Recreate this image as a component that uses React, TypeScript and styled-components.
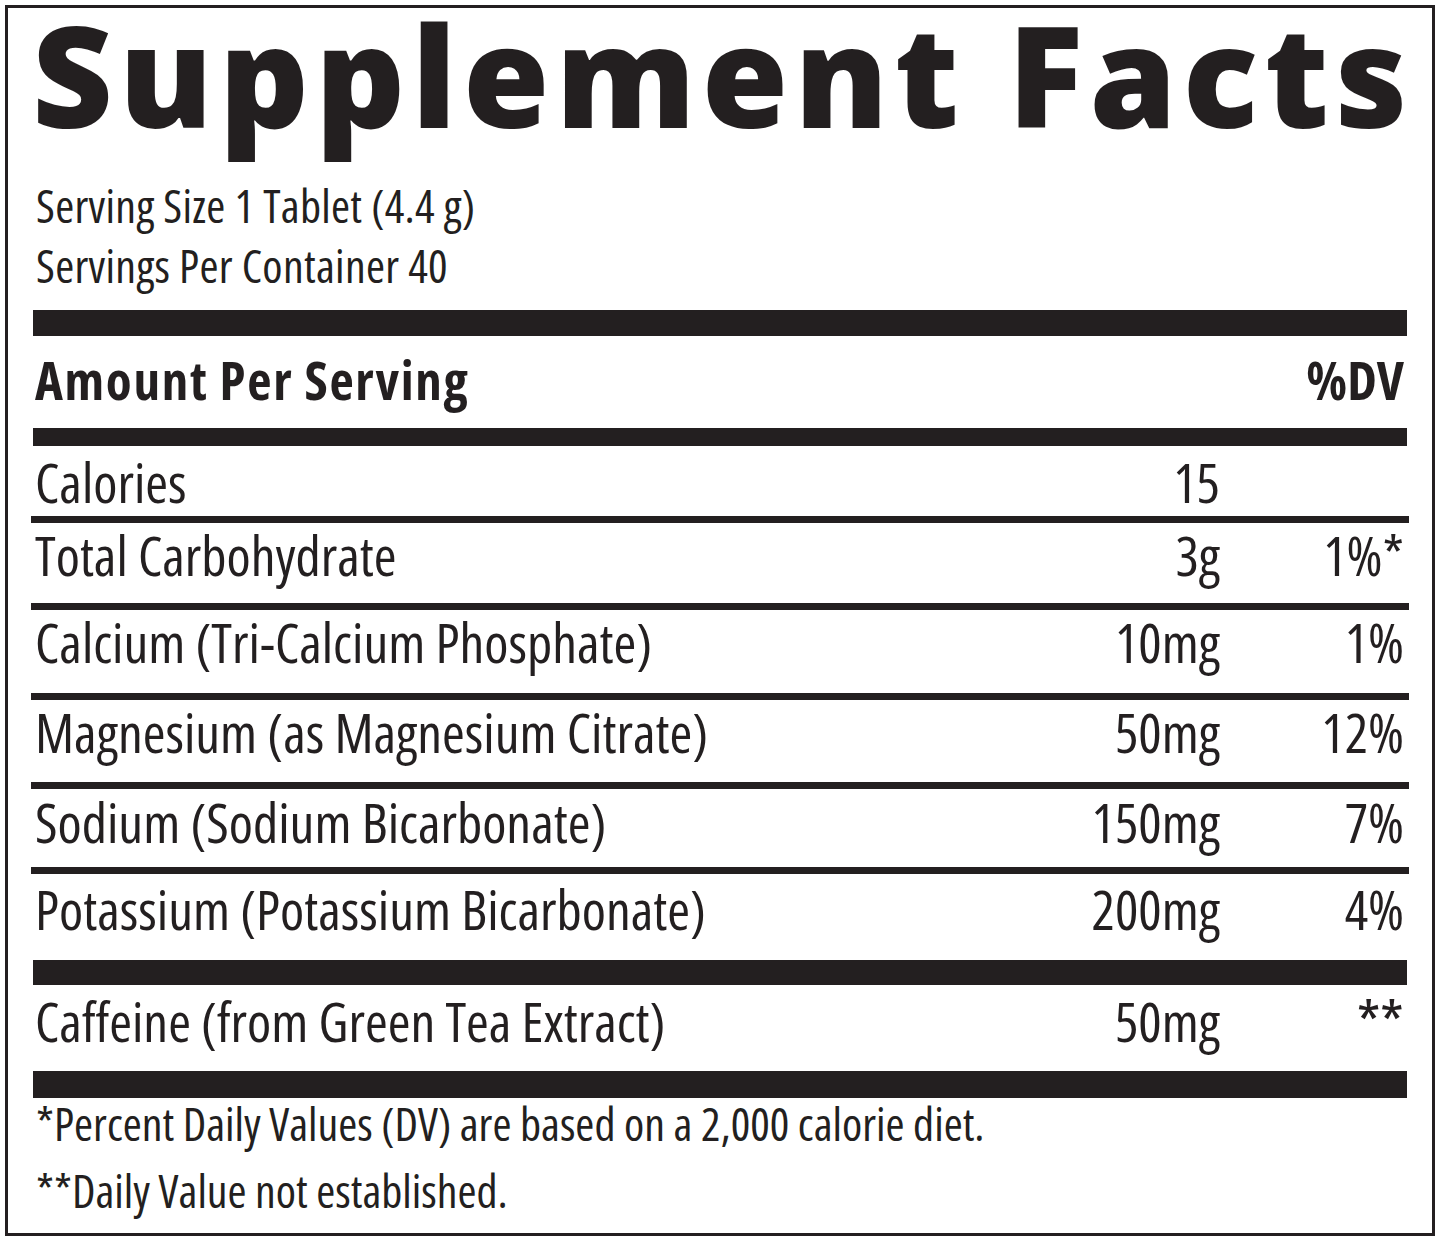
import React from "react";
import styled, { createGlobalStyle } from "styled-components";

const ink = "#231f20";

const GlobalStyle = createGlobalStyle`
  html, body { margin: 0; padding: 0; background: #ffffff; }
  body { font-family: "Open Sans", "Liberation Sans", sans-serif; color: ${ink}; }
`;

const Page = styled.div`
  padding: 5px 10px 2px 5px;
`;

const Label = styled.section`
  box-sizing: border-box;
  width: 1430px;
  height: 1231px;
  border: 3px solid ${ink};
  padding: 0 25px;
  display: flex;
  flex-direction: column;
  font-family: "Open Sans", "Liberation Sans", sans-serif;
  font-stretch: 75%;
  color: ${ink};
`;

const Title = styled.h1`
  margin: 1px 0 0 -1px;
  font-size: 140px;
  line-height: 130px;
  font-weight: 800;
  font-stretch: 100%;
  letter-spacing: 6.2px;
  white-space: nowrap;
`;

const ServingBlock = styled.div`
  margin-top: 36px;
  display: flex;
  flex-direction: column;
`;

const ServingLine = styled.div`
  font-size: 46px;
  line-height: 60px;
  letter-spacing: 0.3px;
  padding-left: 3px;
  white-space: nowrap;
`;

const Bar = styled.div<{ $h: number; $mt?: number }>`
  height: ${(p) => p.$h}px;
  margin-top: ${(p) => p.$mt || 0}px;
  background: ${ink};
  flex: none;
`;

const Rule = styled.div`
  height: 7px;
  margin: 0 -2px;
  background: ${ink};
  flex: none;
`;

const Row = styled.div<{ $h: number; $pt: number; $bold?: boolean }>`
  height: ${(p) => p.$h}px;
  box-sizing: border-box;
  padding-top: ${(p) => p.$pt}px;
  display: grid;
  grid-template-columns: 1fr auto 187px;
  align-items: start;
  font-size: ${(p) => (p.$bold ? 53 : 55)}px;
  line-height: ${(p) => (p.$bold ? 53 : 55)}px;
  font-weight: ${(p) => (p.$bold ? 700 : 400)};
  flex: none;
`;

const Name = styled.span<{ $wide?: boolean }>`
  padding-left: 2px;
  white-space: nowrap;
  ${(p) => (p.$wide ? "letter-spacing: 1.7px;" : "")}
`;

const Amount = styled.span`
  text-align: right;
  white-space: nowrap;
`;

const DV = styled.span<{ $stars?: boolean }>`
  text-align: right;
  padding-right: 3px;
  white-space: nowrap;
  ${(p) => (p.$stars ? "font-size: 62px; letter-spacing: -1px; padding-right: 4px; margin-top: 2px;" : "")}
`;

const Footnotes = styled.div`
  display: flex;
  flex-direction: column;
  gap: 17px;
`;

const Footnote = styled.p`
  margin: 0;
  font-size: 46px;
  line-height: 50px;
  padding-left: 3px;
  white-space: nowrap;
`;

type Nutrient = { name: string; amount: string; dv: string; h: number; pt: number };

const minerals: Nutrient[] = [
  { name: "Total Carbohydrate", amount: "3g", dv: "1%*", h: 80, pt: 4 },
  { name: "Calcium (Tri-Calcium Phosphate)", amount: "10mg", dv: "1%", h: 83, pt: 4 },
  { name: "Magnesium (as Magnesium Citrate)", amount: "50mg", dv: "12%", h: 82, pt: 4 },
  { name: "Sodium (Sodium Bicarbonate)", amount: "150mg", dv: "7%", h: 78, pt: 5 },
  { name: "Potassium (Potassium Bicarbonate)", amount: "200mg", dv: "4%", h: 86, pt: 7 },
];

export default function App() {
  return (
    <Page>
      <GlobalStyle />
      <Label>
        <Title>Supplement Facts</Title>
        <ServingBlock>
          <ServingLine>Serving Size 1 Tablet (4.4 g)</ServingLine>
          <ServingLine>Servings Per Container 40</ServingLine>
        </ServingBlock>
        <Bar $h={26} $mt={15} />
        <Row $h={92} $pt={17} $bold>
          <Name $wide>Amount Per Serving</Name>
          <Amount />
          <DV>%DV</DV>
        </Row>
        <Bar $h={18} />
        <Row $h={70} $pt={8}>
          <Name>Calories</Name>
          <Amount>15</Amount>
          <DV />
        </Row>
        {minerals.map((m) => (
          <React.Fragment key={m.name}>
            <Rule />
            <Row $h={m.h} $pt={m.pt}>
              <Name>{m.name}</Name>
              <Amount>{m.amount}</Amount>
              <DV>{m.dv}</DV>
            </Row>
          </React.Fragment>
        ))}
        <Bar $h={25} />
        <Row $h={86} $pt={8}>
          <Name>Caffeine (from Green Tea Extract)</Name>
          <Amount>50mg</Amount>
          <DV $stars>**</DV>
        </Row>
        <Bar $h={27} />
        <Footnotes>
          <Footnote>*Percent Daily Values (DV) are based on a 2,000 calorie diet.</Footnote>
          <Footnote>**Daily Value not established.</Footnote>
        </Footnotes>
      </Label>
    </Page>
  );
}
